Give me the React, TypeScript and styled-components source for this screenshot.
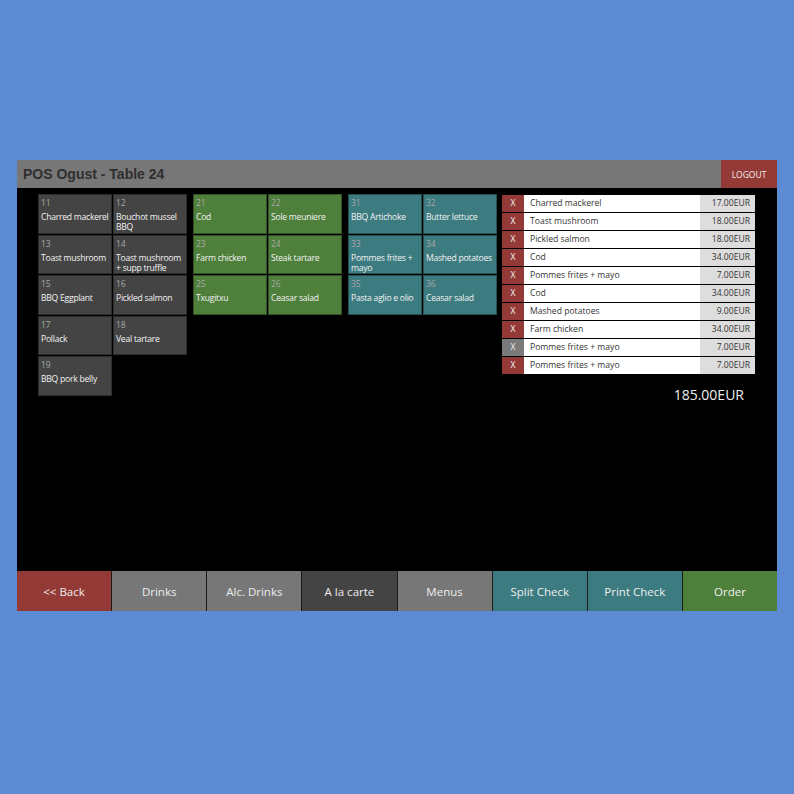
import React from "react";
import styled, { createGlobalStyle } from "styled-components";

const Global = createGlobalStyle`
  html, body { margin: 0; padding: 0; background: #5d8bd3; }
  body { font-family: "Open Sans", "Noto Sans", sans-serif; }
  #root { padding-top: 160px; }
`;

const Frame = styled.div`
  width: 760px;
  margin: 0 auto;
  background: #000;
  display: flex;
  flex-direction: column;
`;

const Header = styled.div`
  height: 28px;
  background: #777;
  display: flex;
  align-items: center;
  justify-content: space-between;
`;

const Title = styled.h1`
  margin: 0 0 0 6px;
  font-family: "Liberation Sans", Arial, sans-serif;
  font-size: 14px;
  font-weight: bold;
  color: #2f2f2f;
`;

const Logout = styled.button`
  height: 28px;
  width: 56px;
  border: none;
  background: #943a36;
  color: #f0f0f0;
  font-family: "Open Sans", sans-serif;
  font-size: 8.5px;
  padding: 0;
`;

const Body = styled.div`
  height: 383px;
  display: flex;
  padding: 6px 0 0 21px;
  box-sizing: border-box;
  gap: 5px;
`;

const Groups = styled.div`
  display: flex;
  gap: 6px;
  align-items: flex-start;
`;

const Group = styled.div`
  display: grid;
  grid-template-columns: 74px 74px;
  grid-auto-rows: 39.5px;
  gap: 1px;
`;

const Cell = styled.div<{ $bg: string }>`
  background: ${(p) => p.$bg};
  box-shadow: 0 0 0 1px rgba(0, 0, 0, 0.35) inset;
  padding: 3px 0 0 3px;
  box-sizing: border-box;
  display: flex;
  flex-direction: column;
  overflow: hidden;
`;

const Num = styled.span`
  font-size: 8.5px;
  line-height: 11px;
  color: #a9a9a9;
`;

const Name = styled.span`
  margin-top: 4px;
  font-size: 8.6px;
  line-height: 10px;
  color: #f2f2f2;
  letter-spacing: -0.25px;
`;

const OrderPanel = styled.div`
  width: 253px;
  display: flex;
  flex-direction: column;
  padding-top: 1px;
`;

const OrderList = styled.div`
  display: flex;
  flex-direction: column;
  gap: 1px;
`;

const OrderRow = styled.div`
  height: 17px;
  display: grid;
  grid-template-columns: 22px 1fr 55px;
  font-size: 8.6px;
  line-height: 17px;
`;

const Remove = styled.div<{ $hover?: boolean }>`
  background: ${(p) => (p.$hover ? "#7a7a7a" : "#943a36")};
  color: #f2f2f2;
  text-align: center;
`;

const ItemName = styled.div`
  background: #fff;
  color: #333;
  padding-left: 6px;
  white-space: nowrap;
`;

const Price = styled.div`
  background: #ddd;
  color: #333;
  text-align: right;
  padding-right: 5px;
`;

const Total = styled.div`
  margin-top: 11px;
  padding-right: 11px;
  text-align: right;
  font-size: 14px;
  color: #eee;
`;

const Footer = styled.div`
  display: grid;
  grid-template-columns: repeat(8, 1fr);
  height: 40px;
  gap: 1px;
  background: #1a1a1a;
`;

const FootBtn = styled.button<{ $bg: string }>`
  border: none;
  padding: 0;
  background: ${(p) => p.$bg};
  color: #eee;
  font-family: "Open Sans", sans-serif;
  font-size: 11.5px;
`;

const GREY = "#444";
const GREEN = "#4e7f3b";
const TEAL = "#3c7b80";

const groups: { bg: string; items: [string, string][] }[] = [
  {
    bg: GREY,
    items: [
      ["11", "Charred mackerel"],
      ["12", "Bouchot mussel BBQ"],
      ["13", "Toast mushroom"],
      ["14", "Toast mushroom + supp truffle"],
      ["15", "BBQ Eggplant"],
      ["16", "Pickled salmon"],
      ["17", "Pollack"],
      ["18", "Veal tartare"],
      ["19", "BBQ pork belly"],
    ],
  },
  {
    bg: GREEN,
    items: [
      ["21", "Cod"],
      ["22", "Sole meuniere"],
      ["23", "Farm chicken"],
      ["24", "Steak tartare"],
      ["25", "Txugitxu"],
      ["26", "Ceasar salad"],
    ],
  },
  {
    bg: TEAL,
    items: [
      ["31", "BBQ Artichoke"],
      ["32", "Butter lettuce"],
      ["33", "Pommes frites + mayo"],
      ["34", "Mashed potatoes"],
      ["35", "Pasta aglio e olio"],
      ["36", "Ceasar salad"],
    ],
  },
];

const orders: [string, string][] = [
  ["Charred mackerel", "17.00EUR"],
  ["Toast mushroom", "18.00EUR"],
  ["Pickled salmon", "18.00EUR"],
  ["Cod", "34.00EUR"],
  ["Pommes frites + mayo", "7.00EUR"],
  ["Cod", "34.00EUR"],
  ["Mashed potatoes", "9.00EUR"],
  ["Farm chicken", "34.00EUR"],
  ["Pommes frites + mayo", "7.00EUR"],
  ["Pommes frites + mayo", "7.00EUR"],
];

const footer: [string, string][] = [
  ["<< Back", "#943a36"],
  ["Drinks", "#777"],
  ["Alc. Drinks", "#777"],
  ["A la carte", "#444"],
  ["Menus", "#777"],
  ["Split Check", TEAL],
  ["Print Check", TEAL],
  ["Order", GREEN],
];

export default function App() {
  return (
    <>
      <Global />
      <Frame>
        <Header>
          <Title>POS Ogust - Table 24</Title>
          <Logout>LOGOUT</Logout>
        </Header>
        <Body>
          <Groups>
            {groups.map((g, gi) => (
              <Group key={gi}>
                {g.items.map(([n, name]) => (
                  <Cell key={n} $bg={g.bg}>
                    <Num>{n}</Num>
                    <Name>{name}</Name>
                  </Cell>
                ))}
              </Group>
            ))}
          </Groups>
          <OrderPanel>
            <OrderList>
              {orders.map(([name, price], i) => (
                <OrderRow key={i}>
                  <Remove $hover={i === 8}>X</Remove>
                  <ItemName>{name}</ItemName>
                  <Price>{price}</Price>
                </OrderRow>
              ))}
            </OrderList>
            <Total>185.00EUR</Total>
          </OrderPanel>
        </Body>
        <Footer>
          {footer.map(([label, bg]) => (
            <FootBtn key={label} $bg={bg}>
              {label}
            </FootBtn>
          ))}
        </Footer>
      </Frame>
    </>
  );
}
